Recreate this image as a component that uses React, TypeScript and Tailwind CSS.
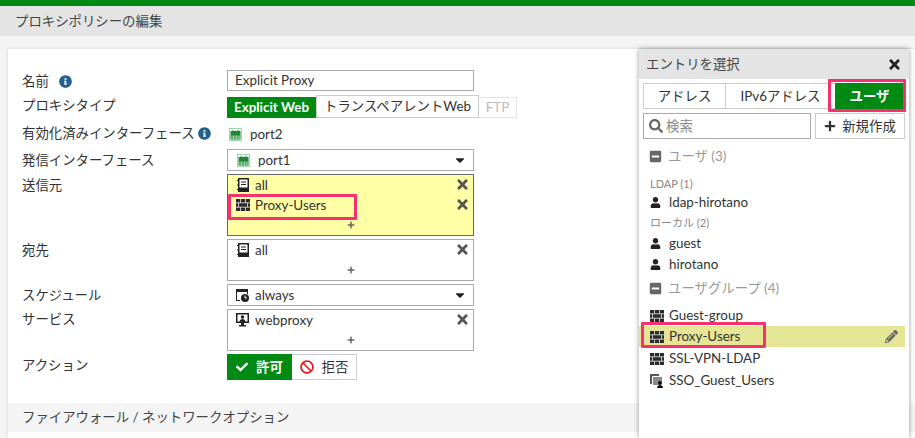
import React from 'react';
import { FaInfoCircle, FaTimes, FaPlus, FaCaretDown, FaUser, FaSearch, FaCheck, FaBan, FaPencilAlt, FaMinusSquare } from 'react-icons/fa';

const FONT = '[font-family:Lato,"Noto_Sans_CJK_JP",sans-serif]';

// ---- fortios style icons ----
const PortIcon = () => (
    <svg width="13" height="13" viewBox="0 0 13 13" className="shrink-0">
        <rect x="0" y="0" width="13" height="13" fill="#9fd3a8" />
        <rect x="1" y="1" width="11" height="11" fill="#fff" />
        <path d="M1.500 3h2v-1h1v1h4v-1h1v1h2v8.500h-10z" fill="#1a8a33" />
        <path d="M3 7.500v3.500M4.500 7.500v3.500M6 7.500v3.500M7.500 7.500v3.500M9 7.500v3.500M10.200 7.500v3.500" stroke="#fff" strokeWidth="0.6" />
    </svg>
);

const GroupIcon = () => (
    <svg width="14" height="12" viewBox="0 0 14 12" className="shrink-0">
        <rect width="14" height="12" fill="#2b2b2b" />
        <path d="M0 3.800h14M0 8.200h14M4.500 0v3.800M9.500 0v3.800M2.500 3.800v4.400M11.500 3.800v4.400M4.500 8.200V12M9.500 8.200V12" stroke="#fff" strokeWidth="0.7" fill="none" />
    </svg>
);

const AddressIcon = () => (
    <svg width="13" height="14" viewBox="0 0 13 14" className="shrink-0">
        <path d="M2 0h11v14H2v-2H1v-1h1V7.500H1v-1h1V3H1V2h1z" fill="#222" />
        <path d="M3.500 1.500h8v8h-8z" fill="#fff" />
        <path d="M5 3.500h5v1H5zM5 6h5v1H5z" fill="#222" />
    </svg>
);

const ScheduleIcon = () => (
    <svg width="13" height="13" viewBox="0 0 13 13" className="shrink-0">
        <path d="M0 0h12v5h-1V3H1v8h3v1H0z" fill="#222" />
        <circle cx="9" cy="9" r="4" fill="#222" />
        <path d="M9 6.500V9h2" stroke="#fff" strokeWidth="1" fill="none" />
    </svg>
);

const ProxyIcon = () => (
    <svg width="13" height="14" viewBox="0 0 13 14" className="shrink-0">
        <path d="M0 0h13v10H8v2h2v1.500H3V12h2v-2H0z" fill="#222" />
        <rect x="1.500" y="1.500" width="10" height="7" fill="#fff" />
        <circle cx="6.500" cy="4" r="1.800" fill="#222" />
        <path d="M3.500 9c0-2 1.500-3 3-3s3 1 3 3z" fill="#222" />
    </svg>
);

const SsoIcon = () => (
    <svg width="14" height="14" viewBox="0 0 14 14" className="shrink-0">
        <path d="M0 0h9v2H2v8H0z" fill="#555" />
        <path d="M3 3h9v5H9v3H3z" fill="#888" />
        <circle cx="10" cy="9" r="2" fill="#111" />
        <path d="M7 14c0-2 1.500-3 3-3s3 1 3 3z" fill="#111" />
    </svg>
);

const Row = ({ label, info, labelClass = 'mt-[1px]', infoClass = '', className, children }: { label: string; info?: boolean; labelClass?: string; infoClass?: string; className: string; children: React.ReactNode }) => (
    <div className={`flex ${className}`}>
        <div className={`w-[205px] h-[20px] shrink-0 flex items-center text-[13.4px] leading-[20px] text-[#333] ${labelClass}`}>
            {label}
            {info && <FaInfoCircle size={13} color="#22608f" className={infoClass} />}
        </div>
        <div className="w-[247px] shrink-0">{children}</div>
    </div>
);

const Entry = ({ icon, name }: { icon: React.ReactNode; name: string }) => (
    <div className="h-[20px] flex items-center pl-[8px] text-[13.4px] text-[#333]">
        <span className="w-[19px] flex">{icon}</span>
        <span className="flex-1">{name}</span>
        <FaTimes size={15} color="#555" className="mr-[3px] -mt-[1px]" />
    </div>
);

const Plus = () => (
    <div className="h-[19px] flex items-center justify-center">
        <FaPlus size={8} color="#666" />
    </div>
);

const ListRow = ({ icon, name, className = '' }: { icon: React.ReactNode; name: string; className?: string }) => (
    <div className={`h-[21px] flex items-center pl-[11px] text-[13.4px] text-[#333] ${className}`}>
        <span className="w-[19px] flex">{icon}</span>
        <span className="flex-1">{name}</span>
    </div>
);

const SectionTitle = ({ label, count }: { label: string; count: string }) => (
    <div className="h-[21px] flex items-center pl-[10px] gap-[6px] text-[13.4px] text-[#999]">
        <FaMinusSquare size={13} color="#666" />
        <span>{label} {count}</span>
    </div>
);

function EntryPanel() {
    return (
        <div className="absolute left-[639px] top-[49px] w-[270px] h-[389px] bg-white shadow-[0_0_5px_rgba(0,0,0,0.4)]">
            <div className="h-[30px] bg-[#e4e4e4] flex items-center justify-between pl-[7px] pr-[7px] text-[13.4px] text-[#444]">
                エントリを選択
                <FaTimes size={15} color="#222" />
            </div>
            <div className="flex mt-[4px] ml-[4px] w-[262px] h-[26px] border border-[#ccc] text-[13.4px] text-[#333] whitespace-nowrap">
                <div className="w-[82px] flex items-center justify-center border-r border-[#ccc]">アドレス</div>
                <div className="w-[109px] flex items-center justify-center">IPv6アドレス</div>
                <div className="flex-1 flex items-center justify-center bg-[#008a14] text-white font-bold -my-px">ユーザ</div>
            </div>
            <div className="flex gap-[4px] mt-[4px] ml-[4px]">
                <div className="w-[168px] h-[26px] border border-[#aaa] flex items-center pl-[5px] gap-[3px] text-[13.4px] text-[#888]">
                    <FaSearch size={14} color="#666" />
                    検索
                </div>
                <div className="w-[90px] h-[26px] border border-[#ccc] flex items-center justify-center gap-[6px] text-[13.4px] text-[#333]">
                    <FaPlus size={12} color="#333" />
                    新規作成
                </div>
            </div>
            <div className="mt-[7px]">
                <SectionTitle label="ユーザ" count="(3)" />
                <div className="h-[16px] mt-[9px] pl-[11px] text-[11px] leading-[16px] text-[#888]">LDAP (1)</div>
                <ListRow icon={<FaUser size={11} color="#222" />} name="ldap-hirotano" />
                <div className="h-[20px] pl-[11px] text-[11px] leading-[19px] text-[#888]">ローカル (2)</div>
                <ListRow icon={<FaUser size={11} color="#222" />} name="guest" />
                <ListRow icon={<FaUser size={11} color="#222" />} name="hirotano" />
                <div className="mt-[3px]">
                    <SectionTitle label="ユーザグループ" count="(4)" />
                </div>
                <div className="mt-[6px]">
                    <ListRow icon={<GroupIcon />} name="Guest-group" />
                    <div className="relative h-[21px] mr-[4px] bg-[#e5e695] flex items-center pr-[7px]">
                        <ListRow icon={<GroupIcon />} name="Proxy-Users" className="flex-1" />
                        <FaPencilAlt size={13} color="#666" />
                    </div>
                    <ListRow icon={<GroupIcon />} name="SSL-VPN-LDAP" className="mt-[1px]" />
                    <ListRow icon={<SsoIcon />} name="SSO_Guest_Users" className="mt-[1px]" />
                </div>
            </div>
            {/* callouts */}
            <div className="absolute left-[189px] top-[30px] w-[78px] h-[33px] border-[3px] border-[#f5326e] rounded-[1px]" />
            <div className="absolute left-[2px] top-[273px] w-[125px] h-[26px] border-[3px] border-[#f5326e] rounded-[1px]" />
        </div>
    );
}

export default function App() {
    return (
        <div className={`relative w-[915px] h-[438px] overflow-hidden bg-[#f4f4f4] ${FONT}`}>
            <div className="h-[6px] bg-[#008a14]" />
            <div className="h-[30px] bg-[#e4e4e4] flex items-center pl-[15px] text-[13.4px] text-[#444]">プロキシポリシーの編集</div>
            <div className="mt-[13px] ml-[8px] h-[389px] bg-white shadow-[0_0_3px_rgba(0,0,0,0.15)] pt-[21px]">
                <div className="pl-[14px]">
                    <Row label="名前" info infoClass="ml-[10px]" className="h-[27px]">
                        <div className="h-[21px] border border-[#aaa] flex items-center pl-[7px] text-[13.4px] text-[#333]">Explicit Proxy</div>
                    </Row>
                    <Row label="プロキシタイプ" labelClass="-mt-[2px]" className="h-[27px]">
                        <div className="flex text-[13.4px] items-start whitespace-nowrap">
                            <div className="h-[21px] w-[89px] shrink-0 bg-[#008a14] text-white font-bold flex items-center justify-center">Explicit Web</div>
                            <div className="h-[23px] -mt-[2px] w-[163px] shrink-0 bg-white border border-[#ccc] flex items-center justify-center text-[#333]">トランスペアレントWeb</div>
                            <div className="h-[21px] w-[38px] shrink-0 border border-[#e4e4e4] border-l-0 flex items-center justify-center text-[#bbb]">FTP</div>
                        </div>
                    </Row>
                    <Row label="有効化済みインターフェース" info labelClass="-mt-[1px]" infoClass="ml-[3px]" className="h-[25px]">
                        <div className="h-[21px] flex items-center pl-[2px] gap-[8px] text-[13.4px] text-[#333]">
                            <PortIcon />
                            port2
                        </div>
                    </Row>
                    <Row label="発信インターフェース" className="h-[25px]">
                        <div className="h-[22px] border border-[#aaa] flex items-center pl-[9px] pr-[6px] gap-[8px] text-[13.4px] text-[#333]">
                            <PortIcon />
                            <span className="flex-1">port1</span>
                            <FaCaretDown size={14} color="#222" />
                        </div>
                    </Row>
                    <Row label="送信元" className="h-[65px]">
                        <div className="relative h-[62px] border border-[#666] bg-[#ffffa6]">
                            <Entry icon={<AddressIcon />} name="all" />
                            <Entry icon={<GroupIcon />} name="Proxy-Users" />
                            <Plus />
                            <div className="absolute left-0 top-[19px] w-[129px] h-[26px] border-[3px] border-[#f5326e] rounded-[1px]" />
                        </div>
                    </Row>
                    <Row label="宛先" className="h-[45px]">
                        <div className="h-[42px] border border-[#aaa]">
                            <Entry icon={<AddressIcon />} name="all" />
                            <Plus />
                        </div>
                    </Row>
                    <Row label="スケジュール" className="h-[25px]">
                        <div className="h-[22px] border border-[#aaa] flex items-center pl-[8px] pr-[6px] gap-[6px] text-[13.4px] text-[#333]">
                            <ScheduleIcon />
                            <span className="flex-1">always</span>
                            <FaCaretDown size={14} color="#222" />
                        </div>
                    </Row>
                    <Row label="サービス" labelClass="mt-0" className="h-[45px]">
                        <div className="h-[42px] border border-[#aaa]">
                            <Entry icon={<ProxyIcon />} name="webproxy" />
                            <Plus />
                        </div>
                    </Row>
                    <Row label="アクション" className="h-[49px]">
                        <div className="flex h-[26px] text-[13.4px]">
                            <div className="w-[65px] bg-[#008a14] text-white font-bold flex items-center justify-center gap-[8px]">
                                <FaCheck size={12} color="#fff" />
                                許可
                            </div>
                            <div className="w-[65px] border border-[#ccc] border-l-0 flex items-center justify-center gap-[8px] text-[#333]">
                                <FaBan size={14} color="#e02020" />
                                拒否
                            </div>
                        </div>
                    </Row>
                </div>
                <div className="h-[29px] bg-[#f4f4f4] flex items-center pl-[14px] text-[13.4px] text-[#444]">ファイアウォール / ネットワークオプション</div>
            </div>
            <EntryPanel />
        </div>
    );
}
